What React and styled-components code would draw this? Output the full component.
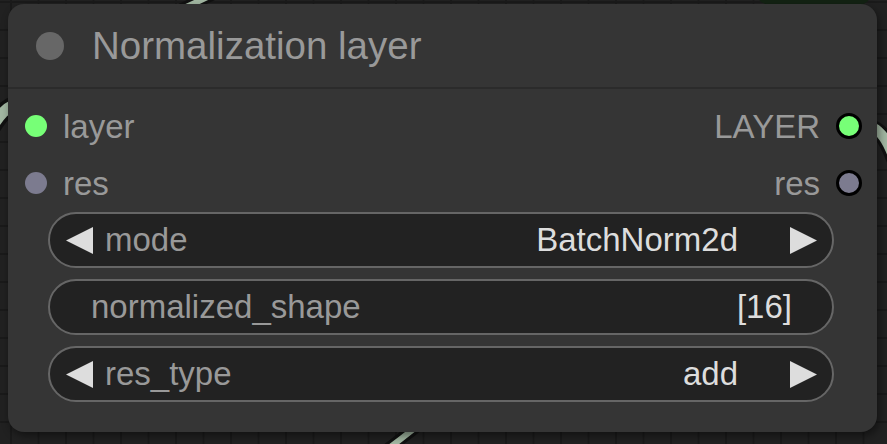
import React from "react";
import styled, { createGlobalStyle } from "styled-components";

const GlobalStyle = createGlobalStyle`
  html, body {
    margin: 0;
    padding: 0;
    background: #202020;
    overflow: hidden;
  }
  * {
    box-sizing: border-box;
  }
`;

const inputs = [
  { name: "layer", color: "#77ff77" },
  { name: "res", color: "#7c7b8f" },
];

const outputs = [
  { name: "LAYER", color: "#77ff77" },
  { name: "res", color: "#7c7b8f" },
];

const widgets = [
  { label: "mode", value: "BatchNorm2d", combo: true },
  { label: "normalized_shape", value: "[16]", combo: false },
  { label: "res_type", value: "add", combo: true },
];

const Links = () => (
  <LinkLayer viewBox="0 0 887 444" width="887" height="444">
    <g fill="none" strokeLinecap="round">
      <path d="M170 14 C190 6 205 -2 230 -14" stroke="#111" strokeWidth="12" />
      <path d="M170 14 C190 6 205 -2 230 -14" stroke="#a3b8a3" strokeWidth="6" />
      <path d="M-40 170 C-14 150 -4 100 24 104 L36 125" stroke="#111" strokeWidth="18" />
      <path d="M-40 170 C-14 150 -4 100 24 104 L36 125" stroke="#a3b8a3" strokeWidth="11" />
      <path d="M850 125 C880 122 886 135 900 175" stroke="#111" strokeWidth="16" />
      <path d="M850 125 C880 122 886 135 900 175" stroke="#a3b8a3" strokeWidth="10" />
      <path d="M360 470 C380 455 400 440 425 420" stroke="#111" strokeWidth="12" />
      <path d="M360 470 C380 455 400 440 425 420" stroke="#a3b8a3" strokeWidth="6" />
    </g>
    <rect x="756" y="-40" width="116" height="45" rx="14" fill="#132213" />
  </LinkLayer>
);

const TriangleLeft = () => (
  <svg width="27" height="27" viewBox="0 0 27 27">
    <polygon points="0,13.5 27,0 27,27" fill="#dddddd" />
  </svg>
);

const TriangleRight = () => (
  <svg width="27" height="27" viewBox="0 0 27 27">
    <polygon points="27,13.5 0,0 0,27" fill="#dddddd" />
  </svg>
);

const App = () => {
  return (
    <>
      <GlobalStyle />
      <Canvas>
        <Links />
        <Node>
          <Title>
            <TitleDot />
            <TitleText>Normalization layer</TitleText>
          </Title>
          <Slots>
            {inputs.map((input, i) => (
              <SlotRow key={input.name}>
                <SlotSide>
                  <Dot $color={input.color} />
                  <SlotLabel>{input.name}</SlotLabel>
                </SlotSide>
                <SlotSide>
                  <SlotLabel>{outputs[i].name}</SlotLabel>
                  <Dot $color={outputs[i].color} $outlined />
                </SlotSide>
              </SlotRow>
            ))}
          </Slots>
          <Widgets>
            {widgets.map(w => (
              <Widget key={w.label} $combo={w.combo}>
                {w.combo && <TriangleLeft />}
                <WidgetLabel>{w.label}</WidgetLabel>
                <WidgetValue $combo={w.combo}>{w.value}</WidgetValue>
                {w.combo && <TriangleRight />}
              </Widget>
            ))}
          </Widgets>
        </Node>
      </Canvas>
    </>
  );
};

const Canvas = styled.div`
  position: relative;
  width: 887px;
  height: 444px;
  padding: 4px 10px 0 8px;
  background-color: #212121;
  background-image:
    linear-gradient(#1a1a1a 2px, transparent 2px),
    linear-gradient(90deg, #1a1a1a 2px, transparent 2px);
  background-size: 27.5px 28px;
  background-position: 10px 1px;
  font-family: "Liberation Sans", Arial, sans-serif;
  overflow: hidden;
`;

const LinkLayer = styled.svg`
  position: absolute;
  left: 0;
  top: 0;
`;

const Node = styled.div`
  position: relative;
  width: 869px;
  height: 428px;
  background: #353535;
  border-radius: 16px;
  box-shadow: 2px 4px 8px rgba(0, 0, 0, 0.45);
  display: flex;
  flex-direction: column;
`;

const Title = styled.div`
  height: 85px;
  display: flex;
  align-items: center;
  padding-left: 28px;
  gap: 28px;
  border-bottom: 2px solid #2b2b2b;
`;

const TitleDot = styled.div`
  width: 28px;
  height: 28px;
  border-radius: 50%;
  background: #676767;
`;

const TitleText = styled.div`
  font-size: 38.5px;
  color: #999999;
  padding-top: 1px;
`;

const Slots = styled.div`
  padding-top: 8px;
  display: flex;
  flex-direction: column;
`;

const SlotRow = styled.div`
  height: 57px;
  display: flex;
  align-items: center;
  justify-content: space-between;
  padding: 0 15px 0 17px;
`;

const SlotSide = styled.div`
  display: flex;
  align-items: center;
  gap: 16px;
`;

const Dot = styled.div`
  width: ${props => (props.$outlined ? "26px" : "22px")};
  height: ${props => (props.$outlined ? "26px" : "22px")};
  border-radius: 50%;
  background: ${props => props.$color};
  border: ${props => (props.$outlined ? "3px solid #000" : "none")};
`;

const SlotLabel = styled.span`
  font-size: 33px;
  color: #999999;
  padding-top: 3px;
`;

const Widgets = styled.div`
  display: flex;
  flex-direction: column;
  gap: 11px;
  padding: 1px 43px 0 40px;
`;

const Widget = styled.div`
  height: 56px;
  border-radius: 28px;
  background: #222222;
  border: 2px solid #666666;
  display: flex;
  align-items: center;
  padding: ${props => (props.$combo ? "0 15px 0 16px" : "0 40px 0 41px")};
  gap: 12px;
`;

const WidgetLabel = styled.span`
  flex: 1;
  font-size: 33px;
  color: #999999;
`;

const WidgetValue = styled.span`
  font-size: 33px;
  color: #dddddd;
  margin-right: ${props => (props.$combo ? "40px" : "0")};
`;

export default App;
